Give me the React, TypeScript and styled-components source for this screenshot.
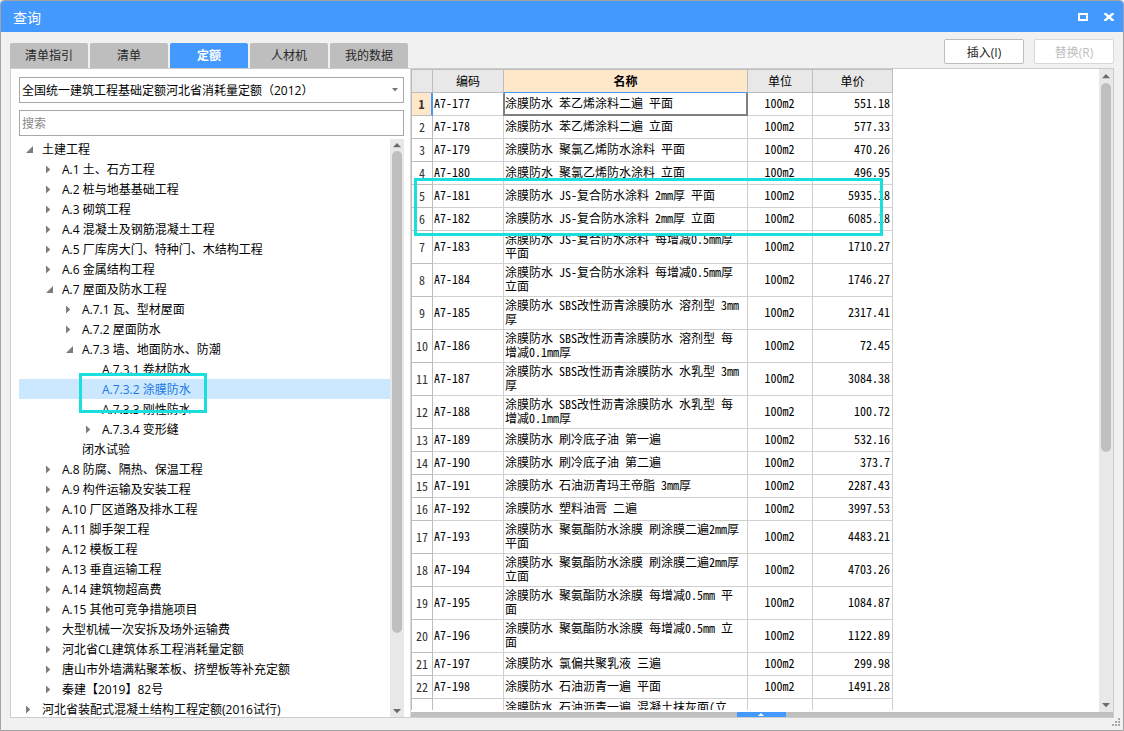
import React from "react";
import styled, { createGlobalStyle, css } from "styled-components";

const ui = `"Open Sans", "Noto Sans CJK SC", sans-serif`;
const mono = `"Noto Sans Mono CJK SC", "Noto Sans CJK SC", monospace`;
const blue = "#4499ff";
const mark = "#1adfdf";

const GlobalStyle = createGlobalStyle`
  * { box-sizing: border-box; }
  body { margin: 0; background: #f4f4f4; font-family: ${ui}; font-size: 12px; color: #000; }
  button, input, select { font: inherit; margin: 0; }
`;

const Window = styled.div`
  display: flex;
  flex-direction: column;
  height: 100vh;
  border: 1px solid #a3a3a3;
  border-radius: 4px 4px 0 0;
  background: #f1f1f1;
  overflow: hidden;
  position: relative;
`;

const TitleBar = styled.header`
  display: flex;
  align-items: center;
  justify-content: space-between;
  flex: none;
  height: 31px;
  padding: 0 4px 0 12px;
  background: ${blue};
  color: #fff;
`;

const Title = styled.h1`
  margin: 0;
  padding-top: 2px;
  font-size: 14px;
  line-height: 20px;
  font-weight: 400;
`;

const WindowButtons = styled.div`
  display: flex;
  gap: 6px;
`;

const WindowButton = styled.button`
  display: flex;
  align-items: center;
  justify-content: center;
  width: 20px;
  height: 20px;
  padding: 0;
  border: 0;
  background: none;
  color: #fff;
`;

const Body = styled.main`
  display: flex;
  flex-direction: column;
  flex: 1;
  min-height: 0;
  padding: 0 9px 12px;
`;

const TopRow = styled.div`
  display: flex;
  align-items: flex-end;
  justify-content: space-between;
  flex: none;
  height: 36px;
`;

const Tabs = styled.nav`
  display: flex;
  gap: 2px;
`;

const Tab = styled.button<{ $active?: boolean }>`
  width: 78px;
  height: 25px;
  padding: 0;
  border: 0;
  border-radius: 2px 2px 0 0;
  background: ${(p) => (p.$active ? blue : "#bebebe")};
  color: ${(p) => (p.$active ? "#fff" : "#262626")};
  font-weight: ${(p) => (p.$active ? 700 : 400)};
  line-height: 25px;
`;

const Actions = styled.div`
  display: flex;
  gap: 10px;
  padding-bottom: 4px;
`;

const ActionButton = styled.button`
  width: 80px;
  height: 25px;
  padding: 0;
  border: 1px solid #bdbdbd;
  border-radius: 2px;
  background: #fff;
  color: #222;
  &:disabled {
    border-color: #d8d8d8;
    color: #bdbdbd;
  }
`;

const Panels = styled.div`
  display: flex;
  flex: 1;
  min-height: 0;
  border: 1px solid #cdcdcd;
  background: #fff;
`;

const SidePane = styled.section`
  display: flex;
  flex-direction: column;
  flex: 0 0 400px;
  padding: 8px 6px 0 8px;
  border-right: 1px solid #d8d8d8;
`;

const SelectWrap = styled.div`
  position: relative;
  flex: none;
  height: 26px;
  margin-bottom: 7px;
`;

const Select = styled.select`
  appearance: none;
  width: 100%;
  height: 26px;
  padding: 0 20px 0 2px;
  border: 1px solid #a8a8a8;
  border-radius: 0;
  background: #fff;
  color: #000;
`;

const SelectArrow = styled.svg`
  position: absolute;
  right: 6px;
  top: 11px;
  pointer-events: none;
`;

const Search = styled.input`
  flex: none;
  width: 100%;
  height: 26px;
  margin-bottom: 3px;
  padding: 0 2px;
  border: 1px solid #a8a8a8;
  border-radius: 0;
  background: #fff;
  &::placeholder {
    color: #8a8a8a;
    opacity: 1;
  }
`;

const TreeArea = styled.div`
  display: flex;
  flex: 1;
  min-height: 0;
`;

const Tree = styled.ul`
  flex: 1;
  min-width: 0;
  margin: 0;
  padding: 0;
  list-style: none;
  overflow: hidden;
`;

const TreeItem = styled.li<{ $depth: number; $selected?: boolean }>`
  display: flex;
  align-items: center;
  gap: 7px;
  height: 20px;
  padding-left: ${(p) => 4 + p.$depth * 20}px;
  line-height: 20px;
  white-space: nowrap;
  ${(p) =>
    p.$selected &&
    css`
      background: #cce8ff;
      color: #1a78e6;
    `}
`;

const TreeLabel = styled.span`
  position: relative;
  padding-top: 2px;
`;

const Marker = styled.span`
  position: absolute;
  z-index: 2;
  border: 3px solid ${mark};
  pointer-events: none;
`;

const TreeMarker = styled(Marker)`
  inset: -5px -16px -13px -23px;
`;

const RowsMarker = styled(Marker)`
  left: 3px;
  right: 10px;
  top: 109px;
  height: 58px;
`;

const ScrollTrack = styled.div<{ $edge: number }>`
  display: flex;
  flex-direction: column;
  align-items: center;
  flex: 0 0 14px;
  background: #e8e8e8;
  & > svg {
    flex: 0 0 ${(p) => p.$edge}px;
  }
`;

const ScrollRoom = styled.div`
  flex: 1;
  width: 10px;
`;

const ScrollThumb = styled.div<{ $share: number }>`
  height: ${(p) => p.$share}%;
  border-radius: 5px;
  background: #bfbfbf;
`;

const ResultPane = styled.section`
  display: flex;
  flex-direction: column;
  flex: 1;
  min-width: 0;
`;

const ResultArea = styled.div`
  display: flex;
  flex: 1;
  min-height: 0;
`;

const TableViewport = styled.div`
  flex: 1;
  min-width: 0;
  margin-bottom: 2px;
  overflow: hidden;
`;

const TableFrame = styled.div`
  position: relative;
  width: 482px;
`;

const Table = styled.table`
  width: 100%;
  table-layout: fixed;
  border-collapse: separate;
  border-spacing: 0;
  border-left: 1px solid #bdbdbd;
  font-family: ${mono};
  font-size: 12px;
  line-height: 14px;
`;

const HeadCell = styled.th<{ $current?: boolean }>`
  height: 24px;
  padding: 0;
  border-top: 1px solid #bdbdbd;
  border-right: 1px solid #bdbdbd;
  border-bottom: 1px solid ${(p) => (p.$current ? blue : "#bdbdbd")};
  background: ${(p) => (p.$current ? "#ffe7c9" : "#e8e8e8")};
  font-weight: ${(p) => (p.$current ? 700 : 400)};
`;

const NumberCell = styled.th<{ $current?: boolean }>`
  padding: 2px 0;
  border-right: ${(p) => (p.$current ? `2px solid ${blue}` : "1px solid #bdbdbd")};
  border-bottom: 1px solid #bdbdbd;
  background: ${(p) => (p.$current ? "#ffe7c9" : "#fff")};
  color: #333;
  font-weight: ${(p) => (p.$current ? 700 : 400)};
`;

const Cell = styled.td<{
  $align?: "center" | "right";
  $tall?: boolean;
  $current?: boolean;
}>`
  position: relative;
  height: ${(p) => (p.$tall ? 33 : 23)}px;
  padding: 1px ${(p) => (p.$align ? 2 : 3)}px 3px 1px;
  border-right: 1px solid #d0d0d0;
  border-bottom: 1px solid #d0d0d0;
  text-align: ${(p) => p.$align || "left"};
  vertical-align: ${(p) => (p.$tall ? "top" : "middle")};
  ${(p) =>
    p.$current &&
    css`
      &::after {
        content: "";
        position: absolute;
        inset: 0 -1px -1px -1px;
        border: 2px solid #808080;
        border-top: 0;
      }
    `}
`;

const BottomBar = styled.div`
  display: flex;
  justify-content: center;
  flex: none;
  height: 5px;
  padding-right: 2px;
  background: #bfbfbf;
`;

const Expander = styled.button`
  display: flex;
  align-items: center;
  justify-content: center;
  width: 49px;
  height: 5px;
  padding: 0;
  border: 0;
  background: ${blue};
`;

const Grip = styled.svg`
  position: absolute;
  right: 3px;
  bottom: 4px;
`;

type Node = [depth: number, label: string, state?: "open" | "closed" | "selected"];

const nodes: Node[] = [
  [0, "土建工程", "open"],
  [1, "A.1 土、石方工程", "closed"],
  [1, "A.2 桩与地基基础工程", "closed"],
  [1, "A.3 砌筑工程", "closed"],
  [1, "A.4 混凝土及钢筋混凝土工程", "closed"],
  [1, "A.5 厂库房大门、特种门、木结构工程", "closed"],
  [1, "A.6 金属结构工程", "closed"],
  [1, "A.7 屋面及防水工程", "open"],
  [2, "A.7.1 瓦、型材屋面", "closed"],
  [2, "A.7.2 屋面防水", "closed"],
  [2, "A.7.3 墙、地面防水、防潮", "open"],
  [3, "A.7.3.1 卷材防水"],
  [3, "A.7.3.2 涂膜防水", "selected"],
  [3, "A.7.3.3 刚性防水"],
  [3, "A.7.3.4 变形缝", "closed"],
  [2, "闭水试验"],
  [1, "A.8 防腐、隔热、保温工程", "closed"],
  [1, "A.9 构件运输及安装工程", "closed"],
  [1, "A.10 厂区道路及排水工程", "closed"],
  [1, "A.11 脚手架工程", "closed"],
  [1, "A.12 模板工程", "closed"],
  [1, "A.13 垂直运输工程", "closed"],
  [1, "A.14 建筑物超高费", "closed"],
  [1, "A.15 其他可竞争措施项目", "closed"],
  [1, "大型机械一次安拆及场外运输费", "closed"],
  [1, "河北省CL建筑体系工程消耗量定额", "closed"],
  [1, "唐山市外墙满粘聚苯板、挤塑板等补充定额", "closed"],
  [1, "秦建【2019】82号", "closed"],
  [0, "河北省装配式混凝土结构工程定额(2016试行)", "closed"],
];

const rows: [name: string, price: string][] = [
  ["涂膜防水 苯乙烯涂料二遍 平面", "551.18"],
  ["涂膜防水 苯乙烯涂料二遍 立面", "577.33"],
  ["涂膜防水 聚氯乙烯防水涂料 平面", "470.26"],
  ["涂膜防水 聚氯乙烯防水涂料 立面", "496.95"],
  ["涂膜防水 JS-复合防水涂料 2mm厚 平面", "5935.18"],
  ["涂膜防水 JS-复合防水涂料 2mm厚 立面", "6085.18"],
  ["涂膜防水 JS-复合防水涂料 每增减0.5mm厚 平面", "1710.27"],
  ["涂膜防水 JS-复合防水涂料 每增减0.5mm厚 立面", "1746.27"],
  ["涂膜防水 SBS改性沥青涂膜防水 溶剂型 3mm厚", "2317.41"],
  ["涂膜防水 SBS改性沥青涂膜防水 溶剂型 每增减0.1mm厚", "72.45"],
  ["涂膜防水 SBS改性沥青涂膜防水 水乳型 3mm厚", "3084.38"],
  ["涂膜防水 SBS改性沥青涂膜防水 水乳型 每增减0.1mm厚", "100.72"],
  ["涂膜防水 刷冷底子油 第一遍", "532.16"],
  ["涂膜防水 刷冷底子油 第二遍", "373.7"],
  ["涂膜防水 石油沥青玛王帝脂 3mm厚", "2287.43"],
  ["涂膜防水 塑料油膏 二遍", "3997.53"],
  ["涂膜防水 聚氨酯防水涂膜 刷涂膜二遍2mm厚 平面", "4483.21"],
  ["涂膜防水 聚氨酯防水涂膜 刷涂膜二遍2mm厚 立面", "4703.26"],
  ["涂膜防水 聚氨酯防水涂膜 每增减0.5mm 平面", "1084.87"],
  ["涂膜防水 聚氨酯防水涂膜 每增减0.5mm 立面", "1122.89"],
  ["涂膜防水 氯偏共聚乳液 三遍", "299.98"],
  ["涂膜防水 石油沥青一遍 平面", "1491.28"],
];

const TreeArrow = ({ state }: { state?: Node[2] }) => (
  <svg width="12" height="12" viewBox="0 0 12 12" fill="#7d7d7d" aria-hidden="true">
    {state === "open" && <path d="M10 3V10H3Z" />}
    {state === "closed" && <path d="M3 2.5V10.5L7.3 6.5Z" />}
  </svg>
);

const Scrollbar = ({ edge, share }: { edge: number; share: number }) => (
  <ScrollTrack $edge={edge} aria-hidden="true">
    <svg width="14" height={edge} viewBox={`0 ${-edge / 2} 14 ${edge}`} fill="#6b6b75">
      <path d="M3 2.2L7 -2L11 2.2Z" />
    </svg>
    <ScrollRoom>
      <ScrollThumb $share={share} />
    </ScrollRoom>
    <svg width="14" height={edge} viewBox={`0 ${-edge / 2} 14 ${edge}`} fill="#6b6b75">
      <path d="M3 -2L7 2.2L11 -2Z" />
    </svg>
  </ScrollTrack>
);

export default function App() {
  return (
    <>
      <GlobalStyle />
      <Window>
        <TitleBar>
          <Title>查询</Title>
          <WindowButtons>
            <WindowButton aria-label="最大化">
              <svg width="10" height="8" viewBox="0 0 10 8" fill="none" stroke="currentColor" strokeWidth="2">
                <path d="M1 1H9V7H1Z" />
              </svg>
            </WindowButton>
            <WindowButton aria-label="关闭">
              <svg width="10" height="8" viewBox="0 0 10 8" fill="none" stroke="currentColor" strokeWidth="2.4">
                <path d="M0.5 0L9.5 8M9.5 0L0.5 8" />
              </svg>
            </WindowButton>
          </WindowButtons>
        </TitleBar>
        <Body>
          <TopRow>
            <Tabs>
              {["清单指引", "清单", "定额", "人材机", "我的数据"].map((t) => (
                <Tab key={t} $active={t === "定额"}>
                  {t}
                </Tab>
              ))}
            </Tabs>
            <Actions>
              <ActionButton>插入(I)</ActionButton>
              <ActionButton disabled>替换(R)</ActionButton>
            </Actions>
          </TopRow>
          <Panels>
            <SidePane>
              <SelectWrap>
                <Select aria-label="定额库">
                  <option>全国统一建筑工程基础定额河北省消耗量定额（2012）</option>
                </Select>
                <SelectArrow width="6" height="4" viewBox="0 0 6 4" fill="#777">
                  <path d="M0 0H6L3 3.5Z" />
                </SelectArrow>
              </SelectWrap>
              <Search aria-label="搜索" placeholder="搜索" />
              <TreeArea>
                <Tree role="tree">
                  {nodes.map(([depth, label, state]) => (
                    <TreeItem
                      key={label}
                      role="treeitem"
                      aria-selected={state === "selected"}
                      $depth={depth}
                      $selected={state === "selected"}
                    >
                      <TreeArrow state={state} />
                      <TreeLabel>
                        {label}
                        {state === "selected" && <TreeMarker />}
                      </TreeLabel>
                    </TreeItem>
                  ))}
                </Tree>
                <Scrollbar edge={12} share={87} />
              </TreeArea>
            </SidePane>
            <ResultPane>
              <ResultArea>
                <TableViewport>
                  <TableFrame>
                    <Table>
                      <colgroup>
                        <col style={{ width: 21 }} />
                        <col style={{ width: 71 }} />
                        <col style={{ width: 244 }} />
                        <col style={{ width: 65 }} />
                        <col style={{ width: 80 }} />
                      </colgroup>
                      <thead>
                        <tr>
                          <HeadCell />
                          <HeadCell>编码</HeadCell>
                          <HeadCell $current>名称</HeadCell>
                          <HeadCell>单位</HeadCell>
                          <HeadCell>单价</HeadCell>
                        </tr>
                      </thead>
                      <tbody>
                        {rows.map(([name, price], i) => (
                          <tr key={name}>
                            <NumberCell scope="row" $current={i === 0}>
                              {i + 1}
                            </NumberCell>
                            <Cell>A7-{177 + i}</Cell>
                            <Cell $current={i === 0}>{name}</Cell>
                            <Cell $align="center">100m2</Cell>
                            <Cell $align="right">{price}</Cell>
                          </tr>
                        ))}
                        <tr>
                          <NumberCell />
                          <Cell />
                          <Cell $tall>涂膜防水 石油沥青一遍 混凝土抹灰面(立</Cell>
                          <Cell />
                          <Cell />
                        </tr>
                      </tbody>
                    </Table>
                    <RowsMarker />
                  </TableFrame>
                </TableViewport>
                <Scrollbar edge={14} share={60} />
              </ResultArea>
              <BottomBar>
                <Expander aria-label="展开">
                  <svg width="6" height="3" viewBox="0 0 6 3" fill="#fff">
                    <path d="M0 3L3 0L6 3Z" />
                  </svg>
                </Expander>
              </BottomBar>
            </ResultPane>
          </Panels>
        </Body>
        <Grip width="8" height="8" viewBox="0 0 8 8" fill="#a8a8a8" aria-hidden="true">
          <path d="M6 0h2v2h-2zM3 3h2v2h-2zM6 3h2v2h-2zM0 6h2v2h-2zM3 6h2v2h-2zM6 6h2v2h-2z" />
        </Grip>
      </Window>
    </>
  );
}
